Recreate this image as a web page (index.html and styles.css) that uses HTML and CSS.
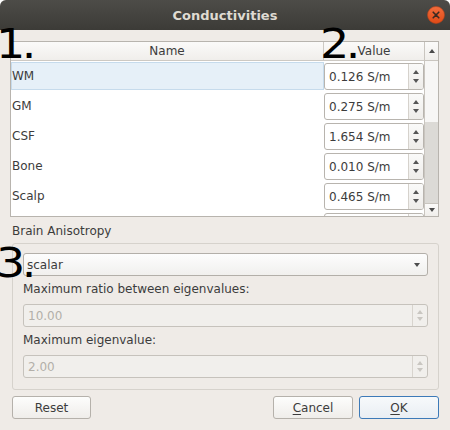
FILE: index.html
```html
<!DOCTYPE html>
<html>
<head>
<meta charset="utf-8">
<title>Conductivities</title>
<link rel="stylesheet" href="styles.css">
</head>
<body>
<div class="window">
  <div class="titlebar">
    <span></span>
    <span class="title">Conductivities</span>
    <span class="close">
      <svg width="18" height="18" viewBox="0 0 18 18">
        <defs>
          <linearGradient id="cg" x1="0" y1="0" x2="0" y2="1">
            <stop offset="0" stop-color="#f26d3d"/>
            <stop offset="1" stop-color="#df4a16"/>
          </linearGradient>
        </defs>
        <circle cx="9" cy="9" r="8.5" fill="url(#cg)" stroke="#b9411a" stroke-width="0.6"/>
        <path d="M6.2 6.2 L11.8 11.8 M11.8 6.2 L6.2 11.8" stroke="#3a2a22" stroke-width="1.6" stroke-linecap="round"/>
      </svg>
    </span>
  </div>

  <div class="content">
    <div class="table">
      <div class="grid">
        <div class="header">
          <div class="h-name">Name</div>
          <div class="h-value">Value</div>
        </div>
        <div class="rows">
          <div class="row">
            <div class="cell-name selected">WM</div>
            <div class="cell-value">
              <div class="spin"><div class="spin-text">0.126 S/m</div><div class="spin-btns"><span class="arr-up"></span><span class="arr-down"></span></div></div>
            </div>
          </div>
          <div class="row">
            <div class="cell-name">GM</div>
            <div class="cell-value">
              <div class="spin"><div class="spin-text">0.275 S/m</div><div class="spin-btns"><span class="arr-up"></span><span class="arr-down"></span></div></div>
            </div>
          </div>
          <div class="row">
            <div class="cell-name">CSF</div>
            <div class="cell-value">
              <div class="spin"><div class="spin-text">1.654 S/m</div><div class="spin-btns"><span class="arr-up"></span><span class="arr-down"></span></div></div>
            </div>
          </div>
          <div class="row">
            <div class="cell-name">Bone</div>
            <div class="cell-value">
              <div class="spin"><div class="spin-text">0.010 S/m</div><div class="spin-btns"><span class="arr-up"></span><span class="arr-down"></span></div></div>
            </div>
          </div>
          <div class="row">
            <div class="cell-name">Scalp</div>
            <div class="cell-value">
              <div class="spin"><div class="spin-text">0.465 S/m</div><div class="spin-btns"><span class="arr-up"></span><span class="arr-down"></span></div></div>
            </div>
          </div>
          <div class="row">
            <div class="cell-name"></div>
            <div class="cell-value">
              <div class="spin"><div class="spin-text"></div><div class="spin-btns"></div></div>
            </div>
          </div>
        </div>
      </div>
      <div class="vscroll">
        <div class="sb-up"><span class="sb-arr-up"></span></div>
        <div class="sb-track"></div>
        <div class="sb-handle"></div>
        <div class="sb-down"><span class="sb-arr-down"></span></div>
      </div>
    </div>

    <div class="lower">
      <div class="section-label">Brain Anisotropy</div>
      <div class="group">
        <div class="combo"><span class="combo-text">scalar</span><span class="combo-arrow"></span></div>
        <div class="field-label">Maximum ratio between eigenvalues:</div>
        <div class="dspin"><div class="dspin-text">10.00</div><div class="dspin-btns"><span class="darr-up"></span><span class="darr-down"></span></div></div>
        <div class="field-label">Maximum eigenvalue:</div>
        <div class="dspin"><div class="dspin-text">2.00</div><div class="dspin-btns"><span class="darr-up"></span><span class="darr-down"></span></div></div>
      </div>
      <div class="buttons">
        <div class="btn btn-reset">Reset</div>
        <div class="spacer"></div>
        <div class="btn btn-cancel"><u>C</u>ancel</div>
        <div class="btn btn-ok"><u>O</u>K</div>
      </div>
    </div>
  </div>

  <div class="mark mark-1">1.</div>
  <div class="mark mark-2">2.</div>
  <div class="mark mark-3">3.</div>
</div>
</body>
</html>
```

FILE: styles.css
```css
* { box-sizing: border-box; }
html, body { margin: 0; padding: 0; background: #ffffff; }
body {
  font-family: "DejaVu Sans", "Liberation Sans", sans-serif;
  font-size: 12px;
  color: #3c3c3c;
}
.window {
  position: relative;
  width: 450px;
  height: 430px;
  background: #efebe7;
  border-radius: 6px 6px 0 0;
  overflow: hidden;
}
.titlebar {
  height: 30px;
  background: linear-gradient(#4d4c48, #3c3b37);
  display: grid;
  grid-template-columns: 1fr auto 1fr;
  align-items: center;
}
.title {
  font-weight: bold;
  font-size: 13px;
  color: #dfdbd2;
}
.close {
  justify-self: end;
  margin-right: 5px;
  width: 18px;
  height: 18px;
  display: flex;
}
.content { padding: 11px 11px 0 10px; }

/* table */
.table {
  height: 176px;
  border: 1px solid #b8b4ae;
  background: #ffffff;
  display: flex;
}
.grid {
  flex: 1;
  min-width: 0;
  display: flex;
  flex-direction: column;
  overflow: hidden;
}
.header {
  height: 19px;
  flex-shrink: 0;
  display: flex;
  border-bottom: 1px solid #cdc9c3;
  background: linear-gradient(#fbfaf9, #f0eeeb);
  line-height: 18px;
}
.h-name {
  width: 313px;
  border-right: 1px solid #cdc9c3;
  text-align: center;
}
.h-value { flex: 1; text-align: center; }
.rows { flex: 1; overflow: hidden; }
.row { height: 30px; display: flex; }
.cell-name {
  width: 313px;
  border: 1px solid transparent;
  margin: 1px 0;
  display: flex;
  align-items: center;
}
.cell-name.selected {
  background: #e6f0f8;
  border-color: #c6dbec;
}
.cell-value { flex: 1; }
.spin {
  margin-top: 2px;
  height: 27px;
  border: 1px solid #b8b4ae;
  border-radius: 3px;
  background: #ffffff;
  display: flex;
}
.spin-text {
  flex: 1;
  padding-left: 4px;
  display: flex;
  align-items: center;
}
.spin-btns {
  width: 15px;
  border-left: 1px solid #d6d2cc;
  background: linear-gradient(#fafaf9, #eeece9);
  border-radius: 0 2px 2px 0;
  display: flex;
  flex-direction: column;
  align-items: center;
  justify-content: space-evenly;
  padding: 2px 0;
}
.arr-up, .arr-down, .sb-arr-up, .sb-arr-down, .darr-up, .darr-down, .combo-arrow {
  width: 0; height: 0;
  border-left: 3.5px solid transparent;
  border-right: 3.5px solid transparent;
}
.arr-up { border-bottom: 4px solid #555555; }
.arr-down { border-top: 4px solid #555555; }

/* scrollbar */
.vscroll {
  width: 14px;
  border-left: 1px solid #c9c5bf;
  background: #f7f6f5;
  display: flex;
  flex-direction: column;
}
.sb-up {
  height: 19px;
  border-bottom: 1px solid #c9c5bf;
  background: linear-gradient(#fbfaf9, #f0eeeb);
  display: flex;
  align-items: center;
  justify-content: center;
}
.sb-track { height: 61px; }
.sb-handle { flex: 1; background: #dcdad6; }
.sb-down {
  height: 13px;
  border-top: 1px solid #c9c5bf;
  background: linear-gradient(#fbfaf9, #f0eeeb);
  display: flex;
  align-items: center;
  justify-content: center;
}
.sb-arr-up { border-bottom: 4px solid #4a4a4a; }
.sb-arr-down { border-top: 4px solid #4a4a4a; }

/* lower */
.lower { padding-left: 2px; }
.section-label { margin-top: 7px; line-height: 15px; }
.group {
  margin-top: 4px;
  border: 1px solid #d6d2cc;
  border-radius: 3px;
  padding: 9px 10px 11px 10px;
}
.combo {
  height: 23px;
  border: 1px solid #b3afa9;
  border-radius: 3px;
  background: linear-gradient(#fdfdfd, #f1f0ee);
  display: flex;
  align-items: center;
  padding: 0 7px 0 3px;
}
.combo-text { flex: 1; }
.combo-arrow { border-top: 4px solid #4d4d4d; }
.field-label { margin-top: 6px; line-height: 15px; }
.dspin {
  margin-top: 7px;
  height: 23px;
  border: 1px solid #c6c2bc;
  border-radius: 3px;
  background: #f1efec;
  display: flex;
}
.dspin-text {
  flex: 1;
  padding-left: 4px;
  display: flex;
  align-items: center;
  color: #b3afa9;
}
.dspin-btns {
  width: 15px;
  border-left: 1px solid #d8d4ce;
  display: flex;
  flex-direction: column;
  align-items: center;
  justify-content: space-evenly;
  padding: 2px 0;
}
.darr-up { border-bottom: 4px solid #c9c6c1; }
.darr-down { border-top: 4px solid #c9c6c1; }

.buttons {
  margin-top: 6px;
  display: flex;
  gap: 6px;
}
.spacer { flex: 1; }
.btn {
  height: 23px;
  border: 1px solid #b5b1ab;
  border-radius: 3px;
  background: linear-gradient(#fdfdfc, #efedea);
  display: flex;
  align-items: center;
  justify-content: center;
}
.btn u { text-decoration-thickness: 1px; text-underline-offset: 2px; }
.btn-reset { width: 79px; }
.btn-cancel { width: 80px; }
.btn-ok {
  width: 80px;
  border-color: #3d7ab8;
  background: linear-gradient(#f7f9fb, #e9eef3);
}

/* overlay markers */
.mark {
  position: absolute;
  font-family: "DejaVu Sans", sans-serif;
  font-size: 40px;
  line-height: 40px;
  color: #000000;
  transform: scaleX(1.15);
  transform-origin: left top;
  letter-spacing: -3px;
}
.mark-1 { left: -4px; top: 24px; }
.mark-2 { left: 320px; top: 24px; }
.mark-3 { left: -4px; top: 243px; }
```
